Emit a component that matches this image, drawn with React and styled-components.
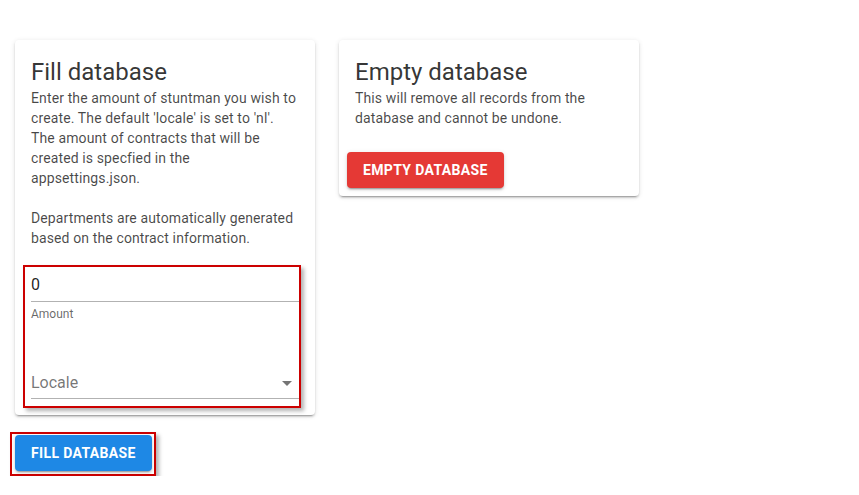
import React from 'react';
import styled, { createGlobalStyle } from 'styled-components';

const GlobalStyle = createGlobalStyle`
  body {
    margin: 0;
    background: #ffffff;
    font-family: Roboto, "Liberation Sans", sans-serif;
  }
`;

const App = () => {
  return (
    <Page>
      <GlobalStyle />
      <CardRow>
        <FillCard>
          <CardTitle>Fill database</CardTitle>
          <CardText>
            Enter the amount of stuntman you wish to create. The default 'locale' is set to 'nl'.
            <br />
            The amount of contracts that will be
            <br />
            created is specfied in the
            <br />
            appsettings.json.
            <br />
            <br />
            Departments are automatically generated based on the contract information.
          </CardText>
          <Highlight>
            <TextInput>
              <InputValue>0</InputValue>
            </TextInput>
            <Hint>Amount</Hint>
            <SelectInput>
              <Placeholder>Locale</Placeholder>
              <Caret />
            </SelectInput>
          </Highlight>
        </FillCard>

        <Card>
          <CardBody>
            <CardTitle>Empty database</CardTitle>
            <CardText>
              This will remove all records from the database and cannot be undone.
            </CardText>
          </CardBody>
          <CardActions>
            <ActionButton $color="#e53935">Empty database</ActionButton>
          </CardActions>
        </Card>
      </CardRow>

      <ButtonHighlight>
        <ActionButton $color="#1e88e5">Fill database</ActionButton>
      </ButtonHighlight>
    </Page>
  );
};

export default App;

const Page = styled.div`
  display: flex;
  flex-direction: column;
  align-items: flex-start;
  padding: 40px 0 0 15px;
`;

const CardRow = styled.div`
  display: flex;
  align-items: flex-start;
  gap: 24px;
`;

const Card = styled.div`
  width: 300px;
  box-sizing: border-box;
  background: #fff;
  border-radius: 4px;
  box-shadow: 0 3px 1px -2px rgba(0, 0, 0, 0.2), 0 2px 2px 0 rgba(0, 0, 0, 0.14),
    0 1px 5px 0 rgba(0, 0, 0, 0.12);
`;

const FillCard = styled(Card)`
  padding: 16px 16px 7px;
`;

const CardBody = styled.div`
  padding: 16px;
`;

const CardActions = styled.div`
  display: flex;
  padding: 8px;
`;

const CardTitle = styled.h2`
  margin: 0;
  font-size: 24px;
  font-weight: 400;
  line-height: 32px;
  color: rgba(0, 0, 0, 0.8);
`;

const CardText = styled.p`
  margin: 0;
  font-size: 14px;
  line-height: 20px;
  letter-spacing: 0.12px;
  color: rgba(0, 0, 0, 0.72);
`;

const Highlight = styled.div`
  margin: 17px -2px 0 -8px;
  padding: 0 0 7px 6px;
  border: 2px solid #cc0000;
  box-shadow: 3px 3px 4px rgba(0, 0, 0, 0.3);
`;

const TextInput = styled.div`
  padding: 8px 0 6px;
  border-bottom: 1px solid rgba(0, 0, 0, 0.3);
`;

const InputValue = styled.div`
  font-size: 16px;
  line-height: 20px;
  color: rgba(0, 0, 0, 0.87);
`;

const Hint = styled.div`
  margin-top: 5px;
  font-size: 12px;
  line-height: 14px;
  color: rgba(0, 0, 0, 0.6);
`;

const SelectInput = styled.div`
  display: flex;
  align-items: center;
  justify-content: space-between;
  margin-top: 52px;
  padding: 0 0 5px;
  border-bottom: 1px solid rgba(0, 0, 0, 0.3);
`;

const Placeholder = styled.div`
  font-size: 16px;
  line-height: 20px;
  color: rgba(0, 0, 0, 0.55);
`;

const Caret = styled.span`
  width: 0;
  height: 0;
  margin-right: 7px;
  border-left: 5px solid transparent;
  border-right: 5px solid transparent;
  border-top: 5px solid rgba(0, 0, 0, 0.54);
`;

const ButtonHighlight = styled.div`
  margin: 17px 0 0 -5px;
  padding: 1px 2px 3px 3px;
  border: 2px solid #cc0000;
  box-shadow: 3px 3px 4px rgba(0, 0, 0, 0.3);
`;

const ActionButton = styled.button`
  height: 36px;
  padding: 0 16px;
  border: none;
  border-radius: 4px;
  background: ${props => props.$color};
  color: #fff;
  font-family: Roboto, "Liberation Sans", sans-serif;
  font-size: 14px;
  font-weight: 700;
  letter-spacing: 0.025em;
  text-transform: uppercase;
  box-shadow: 0 3px 1px -2px rgba(0, 0, 0, 0.2), 0 2px 2px 0 rgba(0, 0, 0, 0.14),
    0 1px 5px 0 rgba(0, 0, 0, 0.12);
`;
